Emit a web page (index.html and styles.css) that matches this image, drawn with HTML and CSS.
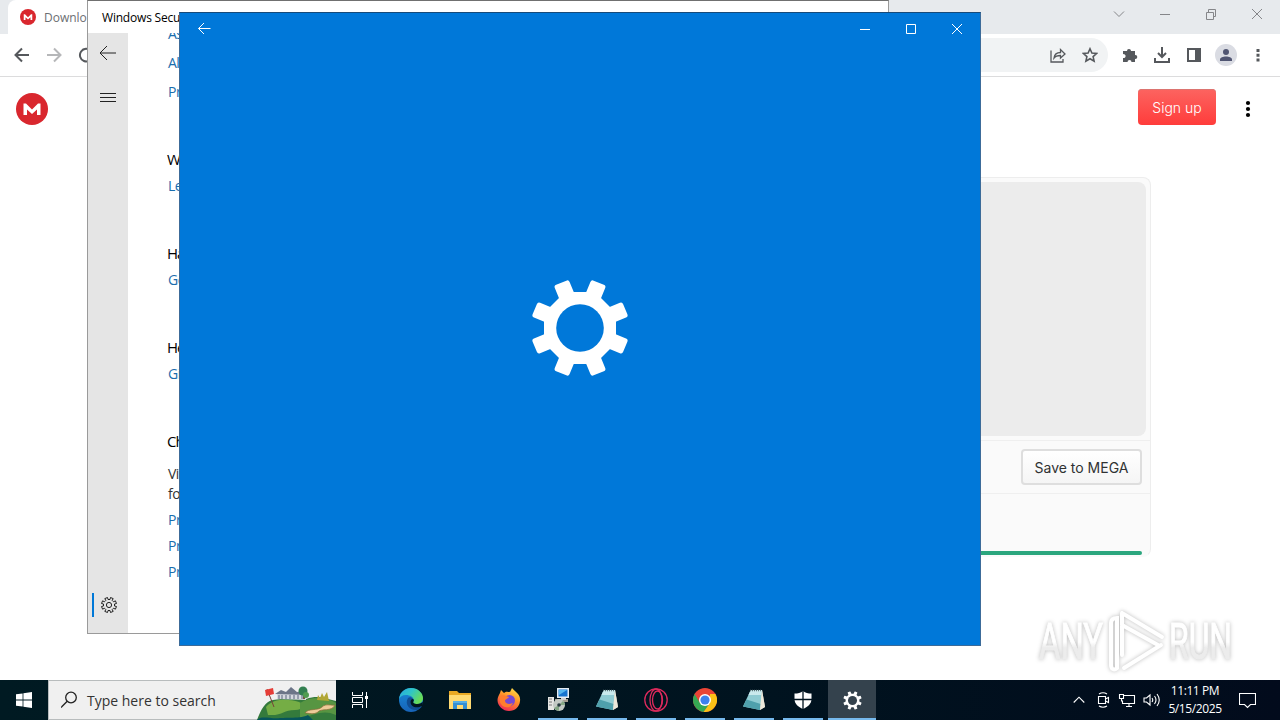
FILE: index.html
```html
<!DOCTYPE html>
<html lang="en">
<head>
  <meta charset="utf-8">
  <title>Desktop</title>
  <link rel="stylesheet" href="styles.css">
</head>
<body>

<svg class="defs" width="0" height="0">
  <symbol id="mega" viewBox="0 0 32 32">
    <circle cx="16" cy="16" r="16" fill="#d9272e"/>
    <path d="M7.500 22V10.500h2.500l6 6 6-6h2.500V22H21v-5.600L16 21l-5-4.600V22z" fill="#fff"/>
  </symbol>
  <symbol id="notepad" viewBox="0 0 24 24">
    <path d="M9 2h11l3 17-5 3z" fill="#d8d2bd"/>
    <path d="M8.500 2.500L20 2l-2 20L1 18.500z" fill="#8fcbd2"/>
    <path d="M8.500 2.500L20 2l-.6 5L6.500 7z" fill="#c9e9ec"/>
    <path d="M4.500 11.500L1 18.500l17 3.500.7-6z" fill="#4fa0ac"/>
    <path d="M20 2l3 17-5 3z" fill="#ece8da"/>
    <path d="M8 2.500h12" stroke="#5d7378" stroke-width="1.500" stroke-dasharray="1 1"/>
  </symbol>
  <symbol id="cog" viewBox="-50 -50 100 100">
    <g id="teeth">
      <rect x="-8" y="-49" width="16" height="24" rx="2.500" transform="rotate(22.5)"/>
      <rect x="-8" y="-49" width="16" height="24" rx="2.500" transform="rotate(67.5)"/>
      <rect x="-8" y="-49" width="16" height="24" rx="2.500" transform="rotate(112.5)"/>
      <rect x="-8" y="-49" width="16" height="24" rx="2.500" transform="rotate(157.5)"/>
      <rect x="-8" y="-49" width="16" height="24" rx="2.500" transform="rotate(202.5)"/>
      <rect x="-8" y="-49" width="16" height="24" rx="2.500" transform="rotate(247.5)"/>
      <rect x="-8" y="-49" width="16" height="24" rx="2.500" transform="rotate(292.5)"/>
      <rect x="-8" y="-49" width="16" height="24" rx="2.500" transform="rotate(337.5)"/>
    </g>
    <path d="M-15-36H15L36-15V15L15 36H-15L-36 15V-15z"/>
    <circle class="hole" r="23.800"/>
  </symbol>
</svg>

<div class="desktop">

  <!-- Chrome -->
  <div class="browser">
    <div class="tabstrip">
      <div class="tab">
        <svg width="16" height="16"><use href="#mega"/></svg>
        <span>Downlo</span>
      </div>
      <div class="controls">
        <svg width="46" height="28"><path d="M18 11.500l5 5 5-5"/></svg>
        <svg width="46" height="28"><path d="M18 14.500h10"/></svg>
        <svg width="46" height="28"><path d="M18.500 12.500h7v7h-7zM20.500 12.500v-3h7v7h-2"/></svg>
        <svg width="46" height="28"><path d="M18 9l10 10M28 9l-10 10"/></svg>
      </div>
    </div>
    <div class="toolbar">
      <div class="nav">
        <svg width="16" height="16" viewBox="0 0 16 16"><path d="M15 8H2M8 1.500L1.500 8 8 14.500"/></svg>
        <svg class="off" width="16" height="16" viewBox="0 0 16 16"><path d="M1 8h13M8 1.500L14.500 8 8 14.500"/></svg>
        <svg width="16" height="16" viewBox="0 0 16 16"><path d="M13 4a6.300 6.300 0 1 0 1.500 5"/></svg>
      </div>
      <div class="address">
        <svg width="16" height="16" viewBox="0 0 16 16"><path d="M1 3.500V15h12v-3M4 11c.5-4 3-5.500 6.500-5.500V2.500L15 7l-4.500 4V8.500C7.500 8.500 5.500 9 4 11z"/></svg>
        <svg width="16" height="16" viewBox="0 0 16 16"><path d="M8 1.800l1.900 4.300 4.700.4-3.500 3.100 1 4.600L8 11.800l-4.100 2.400 1-4.600-3.500-3.100 4.700-.4z"/></svg>
      </div>
      <div class="actions">
        <svg width="16" height="16" viewBox="0 0 16 16"><path d="M1 4h4a2 2 0 1 1 4-.2V4h4v4h.3a2 2 0 1 1 0 4H13v3H9.500a2 2 0 1 0-4 0H1v-4a2 2 0 1 0 0-3.800z" class="solid"/></svg>
        <svg width="18" height="18" viewBox="0 0 18 18"><path d="M9 1v9.500M5 7l4 4 4-4M2 12v4h14v-4"/></svg>
        <svg width="16" height="16" viewBox="0 0 16 16"><path d="M2 2h12v12H2z"/><path d="M9 2h5v12H9z" class="solid"/></svg>
        <svg width="22" height="22" viewBox="0 0 22 22"><circle cx="11" cy="11" r="11" fill="#dadce3"/><circle cx="11" cy="8" r="3" class="person"/><path d="M5 17v-1.500c0-4 12-4 12 0V17z" class="person"/></svg>
        <svg width="4" height="16" viewBox="0 0 4 16"><path d="M.5 2h3v3h-3zM.5 6.700h3v3h-3zM.5 11.400h3v3h-3z" class="solid"/></svg>
      </div>
    </div>
    <div class="page">
      <div class="page-head">
        <svg width="32" height="32"><use href="#mega"/></svg>
        <div class="head-right">
          <button class="signup">Sign up</button>
          <svg width="6" height="18" viewBox="0 0 6 18"><circle cx="3" cy="3" r="2.100"/><circle cx="3" cy="9" r="2.100"/><circle cx="3" cy="15" r="2.100"/></svg>
        </div>
      </div>
      <div class="file-card">
        <div class="preview"></div>
        <div class="file-actions"><button class="save">Save to MEGA</button></div>
        <div class="progress"><div class="bar"></div></div>
      </div>
    </div>
  </div>

  <!-- Windows Security -->
  <div class="security">
    <div class="security-title">Windows Secu</div>
    <div class="security-body">
      <div class="rail">
        <svg width="18" height="16" viewBox="0 0 18 16"><path d="M1 8h16M8 1L1 8l7 7"/></svg>
        <svg class="menu" width="16" height="10" viewBox="0 0 16 10"><path d="M0 .5h16M0 4.500h16M0 8.500h16"/></svg>
        <div class="rail-settings">
          <svg width="18" height="18" viewBox="-9 -9 18 18"><path d="M-1.500-7.500L-1-5.500H1l.5-2 2.700 1.100-1 1.800 1.400 1.400 1.800-1 1.100 2.700-2 .5v2l2 .5-1.100 2.700-1.800-1-1.400 1.400 1 1.800-2.700 1.100-.5-2h-2l-.5 2-2.700-1.100 1-1.800-1.400-1.400-1.800 1-1.100-2.700 2-.5v-2l-2-.5 1.100-2.700 1.800 1 1.400-1.400-1-1.800z"/><circle r="2.600"/></svg>
        </div>
      </div>
      <div class="security-links">
        <a class="first">As</a>
        <a>Al</a>
        <a>Pr</a>
        <h3>W</h3>
        <a>Le</a>
        <h3>Ha</h3>
        <a>Ge</a>
        <h3>He</h3>
        <a>Gi</a>
        <h3>Ch</h3>
        <p>Vi<br>fo</p>
        <a class="privacy">Pr</a>
        <a class="privacy">Pr</a>
        <a class="privacy">Pr</a>
      </div>
    </div>
  </div>

  <!-- Settings splash -->
  <div class="settings">
    <div class="settings-title">
      <svg width="48" height="32"><path d="M18.500 15.500h12M24 10l-5.500 5.500L24 21"/></svg>
      <div class="controls">
        <svg width="46" height="32"><path d="M18 16.500h10"/></svg>
        <svg width="46" height="32"><path d="M18.500 11.500h9v9h-9z"/></svg>
        <svg width="46" height="32"><path d="M18 11l10 10M28 11l-10 10"/></svg>
      </div>
    </div>
    <div class="splash">
      <svg class="cog" width="100" height="100"><use href="#cog"/></svg>
    </div>
  </div>

  <svg class="watermark" width="220" height="70" viewBox="0 0 220 70">
    <defs>
      <linearGradient id="fade" x2="0" y2="1"><stop offset=".5" stop-color="#fff"/><stop offset=".6" stop-color="#ececec"/></linearGradient>
    </defs>
    <text x="9" y="51" textLength="64" lengthAdjust="spacingAndGlyphs">ANY</text>
    <path d="M87 10c-4 0-6 2-6 5v42c0 4 3 6 6 3zM92 5l40 24M92 5v42M92 17l36 20M94 60l37-23"/>
    <text x="139" y="51" textLength="63" lengthAdjust="spacingAndGlyphs">RUN</text>
  </svg>

  <!-- Taskbar -->
  <div class="taskbar">
    <div class="start">
      <svg width="16" height="16" viewBox="0 0 16 16" fill="#fff"><path d="M0 2.300l6.600-.9v6.200H0zM7.400 1.300L16 0v7.600H7.400zM0 8.400h6.600v6.200L0 13.700zM7.400 8.400H16V16l-8.600-1.200z"/></svg>
    </div>
    <div class="search">
      <svg width="18" height="18" viewBox="0 0 18 18"><circle cx="10" cy="6.500" r="5.300"/><path d="M6.200 10.300L0 16.500"/></svg>
      <span>Type here to search</span>
      <svg class="golf" width="80" height="39" viewBox="0 0 80 39">
        <path d="M1 39C5 29 9 20 17 19c10-2 23-1 33-1 14-5 23 1 30 2v19z" fill="#347a3c"/>
        <path d="M10 26c8-9 22-8 33-5 6 2 5 8-4 8-12 0-12 6-27 5z" fill="#75ad45"/>
        <path d="M44 22c10-6 25-7 36 0v12c-13-6-21 0-36 3z" fill="#579542"/>
        <path d="M1 39c4-5 13-1 23-2 13-1 19 1 28-3l5 5z" fill="#07555b"/>
        <path d="M49 32c3-5 13-2 17-6s10-1 13-2c-3 7-14 3-17 7-4 3-10 1-13 1z" fill="#eecb98" stroke="#8a6d3a" stroke-width=".7"/>
        <path d="M21 18v-6l8-1 5-3 6 3 10 1v7z" fill="#d5d8df"/>
        <path d="M19 13l6-4 5 2 5-5 6 5 6-1 4 4z" fill="#6c7588"/>
        <path d="M23 14v4m3-4v4m4-4v4m4-4v4m4-4v4m4-4v4m4-4v4" stroke="#59657c"/>
        <path d="M48 18V8m0 7" stroke="#73533a" stroke-width="2"/>
        <ellipse cx="47" cy="10" rx="4.500" ry="4.500" fill="#327f50"/><ellipse cx="50" cy="14" rx="3" ry="3" fill="#4f9c50"/>
        <path d="M11 8l7 18" stroke="#793f38"/><path d="M9 9l8-2 1 6-8 2z" fill="#e53d37"/>
        <path d="M61 19l1-5 2 3 2-5 2 4 3-5 2 9z" fill="#b1a635"/>
      </svg>
    </div>
    <div class="task view">
      <svg class="line" width="18" height="18" viewBox="0 0 18 18"><path d="M1.500 1v3.500h10V1M1.500 17v-3.500h10V17M1.500 6.500h10v5h-10zM15.500 1v16"/><path d="M14 5h3v3h-3z" fill="#fff" stroke="none"/></svg>
    </div>
    <div class="task">
      <svg width="24" height="24" viewBox="0 0 24 24">
        <defs>
          <linearGradient id="edge1" x1="0" x2="1" y2=".5"><stop offset="0" stop-color="#27a9df"/><stop offset=".5" stop-color="#2fc5c8"/><stop offset="1" stop-color="#69dc56"/></linearGradient>
          <linearGradient id="edge2" y2="1" x2="0"><stop offset="0" stop-color="#188bd8"/><stop offset="1" stop-color="#1763b8"/></linearGradient>
        </defs>
        <circle cx="12" cy="12" r="12" fill="url(#edge2)"/>
        <path d="M0 11C1 4 6 0 12 0c7 0 12 5 12 10 0 4-3 6-6 6-4 0-5-1-3-3 0-4-4-6-8-6-4 0-6 2-7 4z" fill="url(#edge1)"/>
        <path d="M9 10c-4 6 2 13 9 12 2-.5 4-2 5-4-6 3-12-1-11-5 0-1 1-2 2-2-1-2-4-2-5-1z" fill="#104d92"/>
        <path d="M11.500 14c0-2 1-3 2.500-3 1 .5 1 1.500.5 2.300-1 1.500 1 2.700 3.500 2.700 3 0 5-1.500 6-2l-1 4c-2 1-3 1.300-5 1.300-4 0-6.500-2.300-6.500-5.300z" fill="#00151f"/>
      </svg>
    </div>
    <div class="task">
      <svg width="22" height="20" viewBox="0 0 22 20"><path d="M0 1h8l2 2h12v16H0z" fill="#e9a924"/><path d="M0 5h22v14H0z" fill="#ffda72"/><path d="M4 19v-8h14v8h-4v-4H8v4z" fill="#348fd3"/><path d="M4 11h14v2H4z" fill="#55aee5"/></svg>
    </div>
    <div class="task">
      <svg width="24" height="24" viewBox="0 0 24 24">
        <defs><linearGradient id="fox" x1=".8" y1="0" x2=".3" y2="1"><stop offset="0" stop-color="#ffe14a"/><stop offset=".45" stop-color="#ff9228"/><stop offset="1" stop-color="#ef2858"/></linearGradient></defs>
        <path d="M3 5l1-3 3 3c2-2 4-1 6-1l2-4c3 4 9 6 8 13-.5 6-5 10-11 10S.5 18 .5 12C.5 9 2 7 3 5z" fill="url(#fox)"/>
        <circle cx="12.500" cy="12.500" r="5.500" fill="#7549d4"/>
        <path d="M3 8c4-2 6 0 9 1-1 2-4 2-4 4 1 4 6 3 8 2-2 5-9 6-12 1-2-3-1-6-1-8z" fill="#ff7d2d"/>
      </svg>
    </div>
    <div class="task open">
      <svg width="24" height="24" viewBox="0 0 24 24"><path d="M2 9h6v13H2z" fill="#e5e6e3"/><path d="M3 11h3M3 14h3M3 17h3" stroke="#777"/><path d="M9 11h13v3h-4v3H9z" fill="#a39c90"/><path d="M11 0h12v10H11z" fill="#e5edf3"/><path d="M12.500 1.500h9v7h-9z" fill="#1473cf"/><path d="M13 2h8l-8 5z" fill="#55b7ef"/><path d="M15 10h5v2h-5z" fill="#d0d0ce"/><circle cx="13" cy="17" r="6" fill="#c2c9c4"/><path d="M13 17l-5 3a6 6 0 0 0 5 3zM13 17l4-4a6 6 0 0 1 2 4z" fill="#85a785"/><circle cx="13" cy="17" r="1.800" fill="#283c40"/></svg>
    </div>
    <div class="task open"><svg width="24" height="24"><use href="#notepad"/></svg></div>
    <div class="task open">
      <svg width="24" height="24" viewBox="0 0 24 24" fill="none" stroke="#dc2a5c" stroke-width="1.300"><circle cx="12" cy="12" r="11.200"/><ellipse cx="12" cy="12" rx="6" ry="11"/><ellipse cx="13.500" cy="12" rx="5" ry="9"/></svg>
    </div>
    <div class="task open">
      <svg width="24" height="24" viewBox="0 0 24 24"><circle cx="12" cy="12" r="12" fill="#e94436"/><path d="M1.600 6a12 12 0 0 0 9 17.900L17 15l-10 0z" fill="#35a853"/><path d="M22.400 6a12 12 0 0 1-11.800 17.900L17 15l0-9z" fill="#fbc116"/><circle cx="12" cy="12" r="6" fill="#fff"/><circle cx="12" cy="12" r="4.600" fill="#3e80ed"/></svg>
    </div>
    <div class="task open"><svg width="24" height="24"><use href="#notepad"/></svg></div>
    <div class="task open">
      <svg width="18" height="20" viewBox="0 0 18 20"><path d="M9 1c2.500 2 5 2.500 8.500 2.500V9c0 5-4 8-8.500 10C4.500 17 .5 14 .5 9V3.500C4 3.500 6.500 3 9 1z" fill="#fff"/><path d="M9 1v18M0 9.500h18" stroke="#00131f" stroke-width="1.300"/></svg>
    </div>
    <div class="task open active"><svg class="cog" width="19" height="19"><use href="#cog"/></svg></div>
    <div class="tray">
      <svg width="12" height="8" viewBox="0 0 12 8"><path d="M.7 6.500L6 1.200l5.300 5.300"/></svg>
      <svg class="cam" width="13" height="16" viewBox="0 0 13 16"><path d="M1.500 4.500h7v7h-7zM8.500 7l3-1.500v5L8.500 9M2 2q4-2.500 8 0M2 14q4 2.500 8 0"/></svg>
      <svg class="net" width="18" height="15" viewBox="0 0 18 15"><path d="M5.500 2.500h11v8H4.500v-3M8 13.500h6M11 10.500v3M1.500 1.500h4v4h-4zM3.500 5.500v3"/></svg>
      <svg class="vol" width="18" height="14" viewBox="0 0 18 14"><path d="M1 5h2.500L7 2v10L3.500 9H1zM9 5q1.500 2 0 4M11.500 3q3 4 0 8M14 1q4.500 6 0 12"/></svg>
      <div class="clock">11:11 PM<br>5/15/2025</div>
      <svg class="note" width="17" height="17" viewBox="0 0 17 17"><path d="M.5 1.500h16v11h-5l-3 3-3-3h-5z"/></svg>
    </div>
  </div>

</div>

</body>
</html>
```
FILE: styles.css
```css
* {
  box-sizing: border-box;
}

body {
  margin: 0;
  font-family: "Open Sans", "Noto Sans", sans-serif;
}

svg {
  display: block;
  flex: none;
}

.defs {
  position: absolute;
}

.desktop {
  position: relative;
  width: 1280px;
  height: 720px;
  overflow: hidden;
  background: #fff;
}

.controls {
  display: flex;
  margin-left: auto;
}

/* browser */
.browser {
  position: absolute;
  top: 0;
  left: 0;
  width: 1280px;
  height: 680px;
  background: #fff;
}

.tabstrip {
  display: flex;
  height: 34px;
  padding-left: 8px;
  background: #e7eaed;
}

.tabstrip .controls path {
  fill: none;
  stroke: #858689;
}

.tab {
  display: flex;
  align-items: center;
  gap: 8px;
  width: 240px;
  padding-left: 12px;
  border-radius: 8px 8px 0 0;
  background: #fff;
  color: #6c6e72;
  font-size: 12px;
}

.toolbar {
  display: flex;
  align-items: center;
  height: 43px;
  border-bottom: 1px solid #dcdcdd;
}

.toolbar path {
  fill: none;
  stroke: #55585c;
  stroke-width: 2;
}

.toolbar .solid {
  fill: #55585c;
  stroke: none;
}

.toolbar .person {
  fill: #505572;
  stroke: none;
}

.nav {
  display: flex;
  gap: 16px;
  padding: 0 14px;
}

.nav .off path {
  stroke: #b6b7b9;
}

.address {
  display: flex;
  align-items: center;
  justify-content: flex-end;
  gap: 16px;
  flex: 1;
  height: 34px;
  padding-right: 10px;
  border-radius: 17px;
  background: #f1f3f4;
}

.address svg:first-child path {
  stroke-width: 1.3;
}

.address svg:last-child path {
  stroke-width: 1.6;
}

.actions {
  display: flex;
  align-items: center;
  gap: 15px;
  width: 172px;
  padding-left: 14px;
}

.actions svg:nth-child(4) {
  margin-left: -2px;
}

.actions svg:last-child {
  margin-left: 4px;
}

.page-head {
  display: flex;
  align-items: center;
  height: 64px;
  padding-left: 16px;
}

.head-right {
  display: flex;
  align-items: center;
  gap: 29px;
  margin: -4px 29px 0 auto;
}

.head-right svg {
  margin-top: 4px;
}

.signup {
  width: 78px;
  height: 36px;
  padding: 0;
  border: 0;
  border-radius: 4px;
  background: linear-gradient(#fc6460, #ff3c3b);
  box-shadow: inset 0 1px #dc7470;
  color: #fff;
  font: 300 14px Inter, sans-serif;
}

.file-card {
  width: 1022px;
  height: 380px;
  margin: 36px 0 0 129px;
  border: 1px solid #ededed;
  border-bottom-color: #fafafa;
  border-radius: 8px;
  background: #fafafa;
}

.preview {
  height: 254px;
  margin: 4px;
  border-radius: 8px;
  background: #ececec;
}

.file-actions {
  display: flex;
  align-items: center;
  justify-content: flex-end;
  height: 54px;
  padding-right: 8px;
  border: 1px solid #efefef;
  border-width: 1px 0;
}

.save {
  width: 121px;
  height: 36px;
  padding: 0;
  border: 2px solid #dedede;
  border-radius: 4px;
  background: linear-gradient(#fff, #f5f5f5);
  color: #303233;
  font: 14px Inter, sans-serif;
}

.progress {
  padding: 57px 8px 0;
}

.bar {
  height: 4px;
  border-radius: 2px;
  background: #2ba67e;
}

/* windows security */
.security {
  position: absolute;
  top: 0;
  left: 87px;
  display: flex;
  flex-direction: column;
  width: 802px;
  height: 634px;
  border: 1px solid #9a9a9a;
  border-top-color: #707070;
  background: #fff;
}

.security-title {
  height: 32px;
  padding-left: 14px;
  color: #000;
  font-size: 12px;
  line-height: 33px;
  letter-spacing: -0.2px;
}

.security-body {
  display: flex;
  flex: 1;
  min-height: 0;
  overflow: hidden;
}

.rail {
  display: flex;
  flex-direction: column;
  align-items: center;
  width: 40px;
  padding: 12px 0 16px;
  background: #e5e5e5;
}

.rail path,
.rail circle {
  fill: none;
  stroke: #222;
}

.rail .menu {
  margin-top: 32px;
}

.rail-settings {
  width: 32px;
  margin: auto 0 0;
  padding: 3px 0 3px 6px;
  border-left: 2px solid #0078d7;
}

.security-links {
  padding-left: 40px;
  font-size: 14px;
  line-height: 20px;
  letter-spacing: -0.5px;
}

.security-links a {
  display: block;
  height: 20px;
  color: #1a6dad;
}

.security-links a.first {
  margin-top: -9px;
}

.security-links a + a {
  margin-top: 9px;
}

.security-links h3 {
  margin: 47px 0 7px -1px;
  color: #000;
  font-size: 15px;
  font-weight: 400;
  line-height: 20px;
  letter-spacing: -1px;
}

.security-links p {
  margin: 13px 0 0;
  color: #333;
}

.security-links p + a.privacy,
.security-links a + a.privacy {
  margin-top: 6px;
}

/* settings splash screen */
.settings {
  position: absolute;
  top: 12px;
  left: 179px;
  display: flex;
  flex-direction: column;
  width: 802px;
  height: 634px;
  border: 1px solid #3c6b99;
  border-top-color: #174a79;
  background: #0078d9;
}

.settings-title {
  display: flex;
  height: 32px;
}

.settings-title path {
  fill: none;
  stroke: #fff;
}

.splash {
  display: flex;
  align-items: center;
  justify-content: center;
  flex: 1;
  padding-bottom: 34px;
}

.cog {
  fill: #fff;
  --hole: #0078d9;
}

.hole {
  fill: var(--hole);
}

.watermark {
  position: absolute;
  left: 1030px;
  top: 608px;
  overflow: visible;
  filter: drop-shadow(0 0 2px #bbb);
}

.watermark text {
  fill: url(#fade);
  stroke: url(#fade);
  font-family: Roboto, sans-serif;
  font-size: 50px;
}

.watermark path {
  fill: none;
  stroke: #fff;
  stroke-width: 4;
  stroke-linecap: round;
}

/* taskbar */
.taskbar {
  position: absolute;
  left: 0;
  bottom: 0;
  display: flex;
  width: 1280px;
  height: 40px;
  background: linear-gradient(90deg, #001a22, #00131f 60%, #020b1c);
}

.start {
  display: flex;
  align-items: center;
  justify-content: center;
  width: 48px;
}

.search {
  display: flex;
  align-items: center;
  width: 288px;
  padding-left: 12px;
  border: 1px solid #b8bcbd;
  border-right: 0;
  background: #f0f0f0;
  color: #333;
  font-size: 14px;
}

.search span {
  margin-left: 8px;
}

.search > svg:first-child {
  fill: none;
  stroke: #222;
  stroke-width: 1.3;
}

.search .golf {
  margin-left: auto;
}

.task {
  display: flex;
  align-items: center;
  justify-content: center;
  width: 48px;
  margin-right: 1px;
}

.task.view {
  margin-right: 3px;
}

.task.open {
  background: linear-gradient(#76b9ed, #76b9ed) center bottom / 40px 2px no-repeat;
}

.task.active {
  background-color: #34424d;
  background-size: 48px 2px;
}

.task.active .cog {
  --hole: #34424d;
}

.line {
  fill: none;
  stroke: #fff;
}

.tray {
  display: flex;
  align-items: center;
  margin-left: auto;
  padding-right: 24px;
  color: #fff;
}

.tray path {
  fill: none;
  stroke: #fff;
  stroke-width: 1.1;
}

.tray .cam {
  margin-left: 12px;
}

.tray .net {
  margin-left: 8px;
}

.tray .vol {
  margin-left: 7px;
}

.clock {
  width: 70px;
  margin-left: -1px;
  font-size: 12px;
  line-height: 18px;
  letter-spacing: -0.4px;
  text-align: center;
  white-space: nowrap;
}

.tray .note {
  margin-left: 9px;
}
```
